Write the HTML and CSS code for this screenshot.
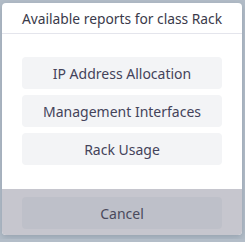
FILE: index.html
```html
<!DOCTYPE html>
<html lang="en">
<head>
    <meta charset="UTF-8">
    <title>Reports</title>
    <link rel="stylesheet" href="styles.css">
</head>
<body>

<div class="dialog">
    <header class="dialog-header">
        <h1>Available reports for class Rack</h1>
    </header>
    <section class="dialog-body">
        <button class="report-btn">IP Address Allocation</button>
        <button class="report-btn">Management Interfaces</button>
        <button class="report-btn">Rack Usage</button>
    </section>
    <footer class="dialog-footer">
        <button class="cancel-btn">Cancel</button>
    </footer>
</div>

</body>
</html>
```

FILE: styles.css
```css
body {
    margin: 0;
    padding: 3px 3px 4px 2px;
    background-color: #b3bdc8;
    font-family: 'Noto Sans', sans-serif;
    color: #3e3d4f;
}
.dialog {
    width: 240px;
    height: 232px;
    background-color: #ffffff;
    border-radius: 4px;
    overflow: hidden;
    display: flex;
    flex-direction: column;
    box-shadow: 0 2px 6px rgba(60, 80, 100, 0.25);
}
.dialog-header {
    height: 30px;
    border-bottom: 1px solid #e4e5ec;
    display: flex;
    align-items: center;
    justify-content: center;
}
.dialog-header h1 {
    margin: 0;
    font-size: 13.8px;
    font-weight: 400;
    color: #3a3a4a;
}
.dialog-body {
    flex: 1;
    padding: 23px 20px 0;
    display: flex;
    flex-direction: column;
    gap: 6px;
}
.report-btn, .cancel-btn {
    height: 32px;
    border: none;
    border-radius: 4px;
    font-family: inherit;
    font-size: 14px;
    color: #44435a;
}
.report-btn {
    background-color: #f3f4f6;
}
.dialog-footer {
    background-color: #c6c6ce;
    padding: 8px 20px 6px;
    display: flex;
    flex-direction: column;
}
.cancel-btn {
    background-color: #bec0c9;
    color: #4a4a5c;
}
```
